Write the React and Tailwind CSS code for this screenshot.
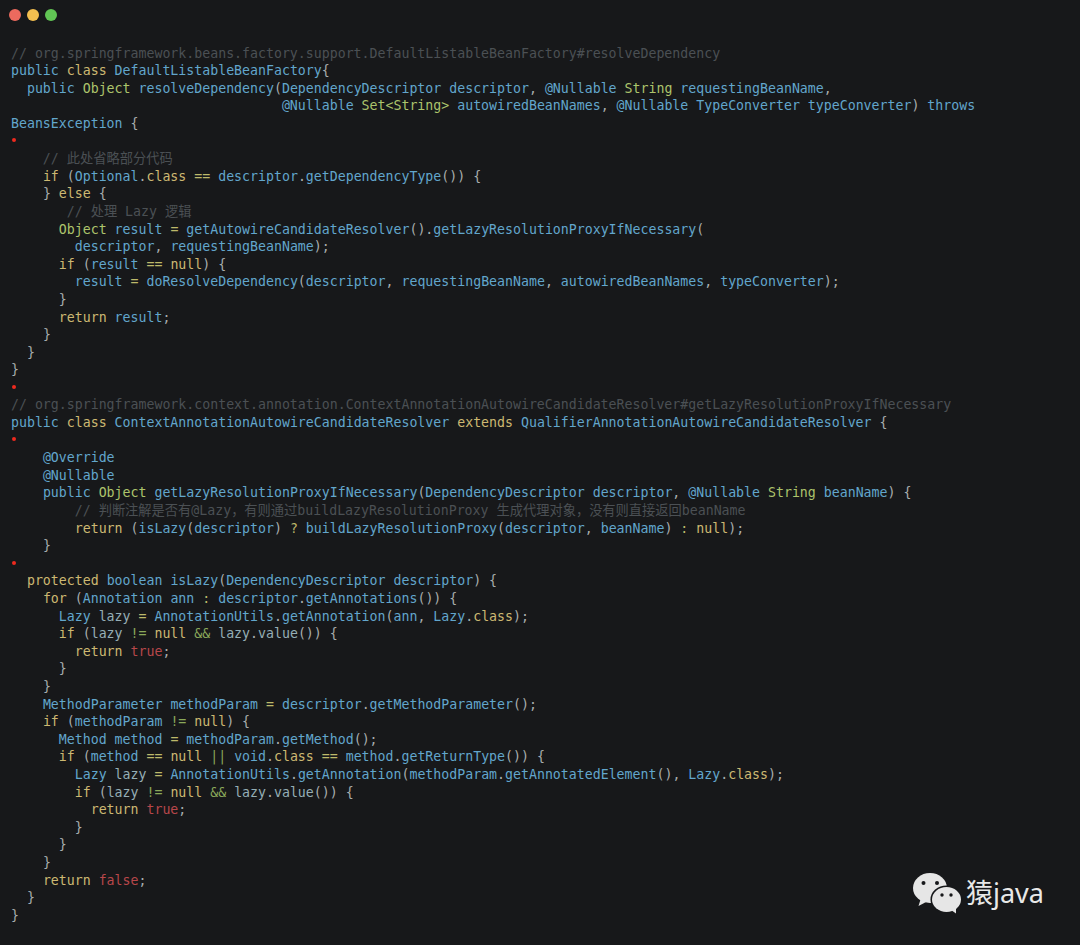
const code = `// org.springframework.beans.factory.support.DefaultListableBeanFactory#resolveDependency
public class DefaultListableBeanFactory{
  public Object resolveDependency(DependencyDescriptor descriptor, @Nullable String requestingBeanName,
                                  @Nullable Set<String> autowiredBeanNames, @Nullable TypeConverter typeConverter) throws
BeansException {
*
    // 此处省略部分代码
    if (Optional.class == descriptor.getDependencyType()) {
    } else {
       // 处理 Lazy 逻辑
      Object result = getAutowireCandidateResolver().getLazyResolutionProxyIfNecessary(
        descriptor, requestingBeanName);
      if (result == null) {
        result = doResolveDependency(descriptor, requestingBeanName, autowiredBeanNames, typeConverter);
      }
      return result;
    }
  }
}
*
// org.springframework.context.annotation.ContextAnnotationAutowireCandidateResolver#getLazyResolutionProxyIfNecessary
public class ContextAnnotationAutowireCandidateResolver extends QualifierAnnotationAutowireCandidateResolver {
*
    @Override
    @Nullable
    public Object getLazyResolutionProxyIfNecessary(DependencyDescriptor descriptor, @Nullable String beanName) {
        // 判断注解是否有@Lazy，有则通过buildLazyResolutionProxy 生成代理对象，没有则直接返回beanName
        return (isLazy(descriptor) ? buildLazyResolutionProxy(descriptor, beanName) : null);
    }
*
  protected boolean isLazy(DependencyDescriptor descriptor) {
    for (Annotation ann : descriptor.getAnnotations()) {
      Lazy lazy = AnnotationUtils.getAnnotation(ann, Lazy.class);
      if (lazy != null && lazy.value()) {
        return true;
      }
    }
    MethodParameter methodParam = descriptor.getMethodParameter();
    if (methodParam != null) {
      Method method = methodParam.getMethod();
      if (method == null || void.class == method.getReturnType()) {
        Lazy lazy = AnnotationUtils.getAnnotation(methodParam.getAnnotatedElement(), Lazy.class);
        if (lazy != null && lazy.value()) {
          return true;
        }
      }
    }
    return false;
  }
}`.split("\n");

const YELLOW = "text-[#cdb872]";
const GREEN = "text-[#adc46c]";
const BLUE = "text-[#62a6cc]";
const RED = "text-[#b8474a]";
const PUNCT = "text-[#a8adad]";
const OP = "text-[#bdb96a]";
const LOGIC = "text-[#8aa95a]";
const LAZY = "text-[#95aeb5]";

const words = {
  class: YELLOW, if: YELLOW, else: YELLOW, return: YELLOW, for: YELLOW,
  protected: YELLOW, extends: YELLOW, null: YELLOW, Object: GREEN, String: GREEN, Set: GREEN,
  true: RED, false: RED, lazy: LAZY, value: LAZY,
};
const ops = { "=": OP, "==": OP, "!=": LOGIC, "&&": LOGIC, "||": LOGIC, "?": OP, ":": OP, "<": GREEN, ">": GREEN };

function colorOf(t) {
  if (words[t]) return words[t];
  if (ops[t]) return ops[t];
  if (/^[@\w]/.test(t)) return BLUE;
  return PUNCT;
}

function Line({ text }) {
  if (text === "*") {
    return (
      <div className="h-[17.6px] flex items-center pl-[1px] pb-[2px]">
        <span className="w-[4px] h-[4px] rounded-full bg-[#ee2a1e]" />
      </div>
    );
  }
  if (text.trim().startsWith("//")) {
    return <div className="h-[17.6px] text-[#4b5054]">{text}</div>;
  }
  const tokens = text.match(/\s+|@?\w+|==|!=|&&|\|\||[^\s\w]/g) || [];
  return (
    <div className="h-[17.6px]">
      {tokens.map((t, i) =>
        /^\s+$/.test(t) ? t : <span key={i} className={colorOf(t)}>{t}</span>
      )}
    </div>
  );
}

export default function App() {
  return (
    <div className="relative w-[1080px] h-[945px] overflow-hidden bg-[#17181a]">
      <div className="h-[44.6px] flex items-start gap-[6px] pl-[9px] pt-[9px]">
        <span className="w-[12px] h-[12px] rounded-full bg-[#ec6a5e]" />
        <span className="w-[12px] h-[12px] rounded-full bg-[#f4bf4f]" />
        <span className="w-[12px] h-[12px] rounded-full bg-[#61c554]" />
      </div>
      <div className="pl-[11px] whitespace-pre text-[13.24px] leading-[17.6px] font-['DejaVu_Sans_Mono','Noto_Sans_CJK_SC',monospace]">
        {code.map((l, i) => <Line key={i} text={l} />)}
      </div>
      <div className="absolute left-[910px] top-[870px] flex items-center gap-[2px] text-[#e8e8e8]">
        <svg width="54" height="46" viewBox="0 0 54 46">
          <ellipse cx="20" cy="18" rx="17" ry="15" fill="#e6e6e6" />
          <path d="M11 28 L8.5 36 L18 31 Z" fill="#e6e6e6" />
          <ellipse cx="36.5" cy="29.5" rx="16" ry="14" fill="#17181a" />
          <ellipse cx="36.5" cy="29.5" rx="14.5" ry="12.5" fill="#e6e6e6" />
          <path d="M41 40 L46 43.5 L46 37 Z" fill="#e6e6e6" />
          <circle cx="13.5" cy="13" r="2" fill="#17181a" />
          <circle cx="27" cy="13" r="2" fill="#17181a" />
          <circle cx="32" cy="25" r="1.7" fill="#17181a" />
          <circle cx="41" cy="25" r="1.7" fill="#17181a" />
        </svg>
        <span className="text-[27px] leading-[46px] font-['Noto_Sans','Noto_Sans_CJK_SC',sans-serif]">猿java</span>
      </div>
    </div>
  );
}
